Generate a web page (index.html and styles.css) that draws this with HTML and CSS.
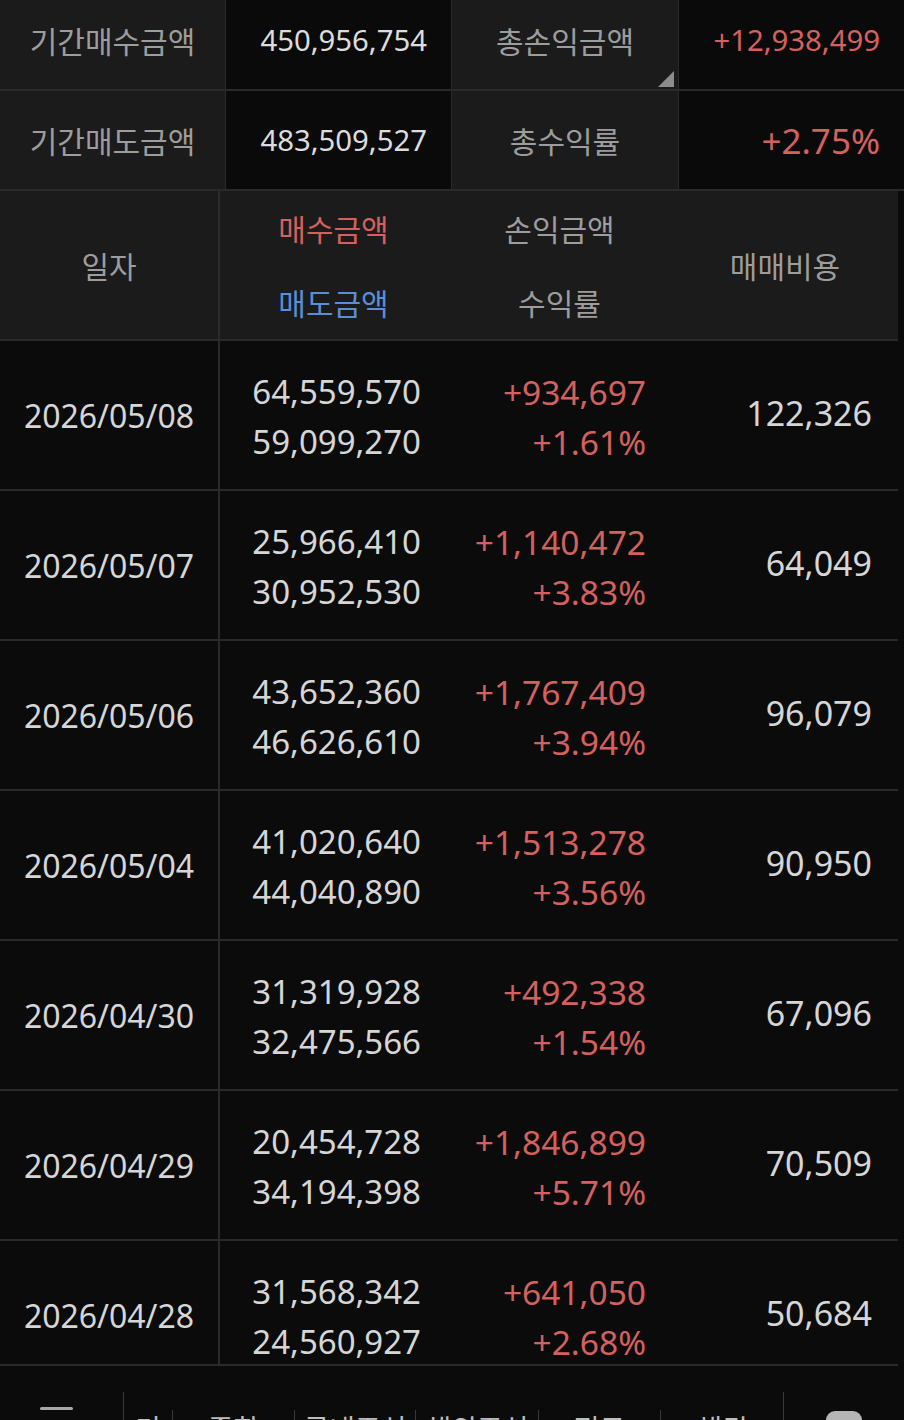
FILE: index.html
```html
<!DOCTYPE html>
<html lang="ko">
<head>
<meta charset="utf-8">
<link rel="stylesheet" href="styles.css">
</head>
<body>
<div class="page">
  <div class="summary">
    <div class="s-label">기간매수금액</div>
    <div class="s-value">450,956,754</div>
    <div class="s-label has-tri">총손익금액<span class="tri"></span></div>
    <div class="s-value up">+12,938,499</div>
    <div class="s-label">기간매도금액</div>
    <div class="s-value">483,509,527</div>
    <div class="s-label">총수익률</div>
    <div class="s-value up big">+2.75%</div>
  </div>

  <div class="table">
    <div class="thead">
      <div class="th c-date">일자</div>
      <div class="th two"><span class="buy">매수금액</span><span class="sell">매도금액</span></div>
      <div class="th two"><span>손익금액</span><span>수익률</span></div>
      <div class="th">매매비용</div>
    </div>

    <div class="row">
      <div class="td c-date">2026/05/08</div>
      <div class="td two num amt"><span>64,559,570</span><span>59,099,270</span></div>
      <div class="td two num pnl up"><span>+934,697</span><span>+1.61%</span></div>
      <div class="td num fee">122,326</div>
    </div>
    <div class="row">
      <div class="td c-date">2026/05/07</div>
      <div class="td two num amt"><span>25,966,410</span><span>30,952,530</span></div>
      <div class="td two num pnl up"><span>+1,140,472</span><span>+3.83%</span></div>
      <div class="td num fee">64,049</div>
    </div>
    <div class="row">
      <div class="td c-date">2026/05/06</div>
      <div class="td two num amt"><span>43,652,360</span><span>46,626,610</span></div>
      <div class="td two num pnl up"><span>+1,767,409</span><span>+3.94%</span></div>
      <div class="td num fee">96,079</div>
    </div>
    <div class="row">
      <div class="td c-date">2026/05/04</div>
      <div class="td two num amt"><span>41,020,640</span><span>44,040,890</span></div>
      <div class="td two num pnl up"><span>+1,513,278</span><span>+3.56%</span></div>
      <div class="td num fee">90,950</div>
    </div>
    <div class="row">
      <div class="td c-date">2026/04/30</div>
      <div class="td two num amt"><span>31,319,928</span><span>32,475,566</span></div>
      <div class="td two num pnl up"><span>+492,338</span><span>+1.54%</span></div>
      <div class="td num fee">67,096</div>
    </div>
    <div class="row">
      <div class="td c-date">2026/04/29</div>
      <div class="td two num amt"><span>20,454,728</span><span>34,194,398</span></div>
      <div class="td two num pnl up"><span>+1,846,899</span><span>+5.71%</span></div>
      <div class="td num fee">70,509</div>
    </div>
    <div class="row">
      <div class="td c-date">2026/04/28</div>
      <div class="td two num amt"><span>31,568,342</span><span>24,560,927</span></div>
      <div class="td two num pnl up"><span>+641,050</span><span>+2.68%</span></div>
      <div class="td num fee">50,684</div>
    </div>
  </div>

  <div class="nav">
    <div class="nav-menu"><span class="dash"></span></div>
    <div class="tabs">
      <span class="tab t1">기일</span>
      <span class="tab t2">종합</span>
      <span class="tab t3">국내주식</span>
      <span class="tab t4">해외주식</span>
      <span class="tab t5">펀드</span>
      <span class="tab t6">채권</span>
    </div>
    <div class="nav-end"><span class="pill"></span></div>
  </div>
</div>
</body>
</html>
```

FILE: styles.css
```css
* { box-sizing: border-box; }

html, body {
  margin: 0;
  padding: 0;
  background: #0b0b0b;
}

body {
  width: 904px;
  height: 1420px;
  overflow: hidden;
  font-family: "Noto Sans", "Noto Sans CJK KR", sans-serif;
  color: #d6d6d6;
}

.page {
  height: 1420px;
  display: flex;
  flex-direction: column;
  overflow: hidden;
}

/* summary */
.summary {
  margin-top: -9px;
  display: grid;
  grid-template-columns: 225px 225px 226px 1fr;
  grid-template-rows: 98px 98px;
  column-gap: 1px;
  row-gap: 2px;
  background: #2a2a2a;
  border-bottom: 2px solid #2a2a2a;
  flex: none;
}

.s-label {
  background: #1b1b1b;
  color: #9d9d9d;
  font-family: "Noto Sans CJK KR", sans-serif;
  font-size: 30px;
  display: flex;
  align-items: center;
  justify-content: center;
  position: relative;
}

.s-value {
  background: #0a0a0a;
  font-size: 29.3px;
  display: flex;
  align-items: center;
  justify-content: flex-end;
  padding-right: 24px;
  color: #dcdcdc;
}

.s-value.big { font-size: 35px; }

.tri {
  position: absolute;
  right: 4px;
  bottom: 2px;
  width: 0;
  height: 0;
  border-left: 16px solid transparent;
  border-bottom: 16px solid #8c8c8c;
}

.up { color: #d5615f !important; }

/* table */
.table {
  flex: 1;
  overflow: hidden;
  width: 898px;
  border-bottom: 2px solid #2a2a2a;
}

.thead, .row {
  display: grid;
  grid-template-columns: 220px 227px 225px 1fr;
  border-bottom: 2px solid #2a2a2a;
}

.thead {
  height: 150px;
  background: #1b1b1b;
}

.row {
  height: 150px;
  background: #0b0b0b;
}

.c-date {
  border-right: 2px solid #2a2a2a;
}

.th {
  color: #9d9d9d;
  font-family: "Noto Sans CJK KR", sans-serif;
  font-size: 30px;
  display: flex;
  align-items: center;
  justify-content: center;
}

.th.two {
  flex-direction: column;
  gap: 30px;
}

.th .buy { color: #d5615f; }
.th .sell { color: #5a8fd8; }

.td {
  font-size: 32px;
  display: flex;
  align-items: center;
  justify-content: center;
}

.td.num {
  justify-content: center;
  align-items: flex-end;
  padding-right: 26px;
}

.td.amt { font-size: 33px; }
.td.pnl { font-size: 33.5px; }

.td.two {
  flex-direction: column;
  line-height: 50px;
  padding-top: 4px;
}

.td.fee {
  font-size: 34px;
  align-items: center;
  justify-content: flex-end;
  padding-bottom: 4px;
}

/* bottom nav */
.nav {
  flex: none;
  height: 54px;
  display: flex;
  align-items: flex-start;
  background: #0b0b0b;
  overflow: hidden;
}

.nav-menu {
  width: 124px;
  height: 54px;
  padding: 41px 0 0 40px;
  border-right: 1px solid #3a3a3a;
  margin-top: 26px;
}

.dash {
  display: block;
  width: 33px;
  height: 3px;
  border-radius: 2px;
  background: #a8a8a8;
  margin-top: -26px;
}

.tabs {
  display: flex;
  padding-top: 44px;
}

.tab {
  font-family: "Noto Sans CJK KR", sans-serif;
  font-size: 28px;
  color: #bdbdbd;
  line-height: 1;
  text-align: center;
  border-right: 1px solid #3a3a3a;
  height: 20px;
  padding-top: 4px;
}

.t1 { width: 49px; }
.t2 { width: 122px; }
.t3 { width: 121px; }
.t4 { width: 123px; }
.t5 { width: 122px; }
.t6 { width: 122px; border-right: none; }

.nav-end {
  margin-left: auto;
  width: 121px;
  height: 54px;
  margin-top: 26px;
  border-left: 1px solid #3a3a3a;
  padding: 19px 0 0 42px;
}

.pill {
  display: block;
  width: 36px;
  height: 30px;
  border-radius: 9px;
  background: #b5b5b5;
}
```
